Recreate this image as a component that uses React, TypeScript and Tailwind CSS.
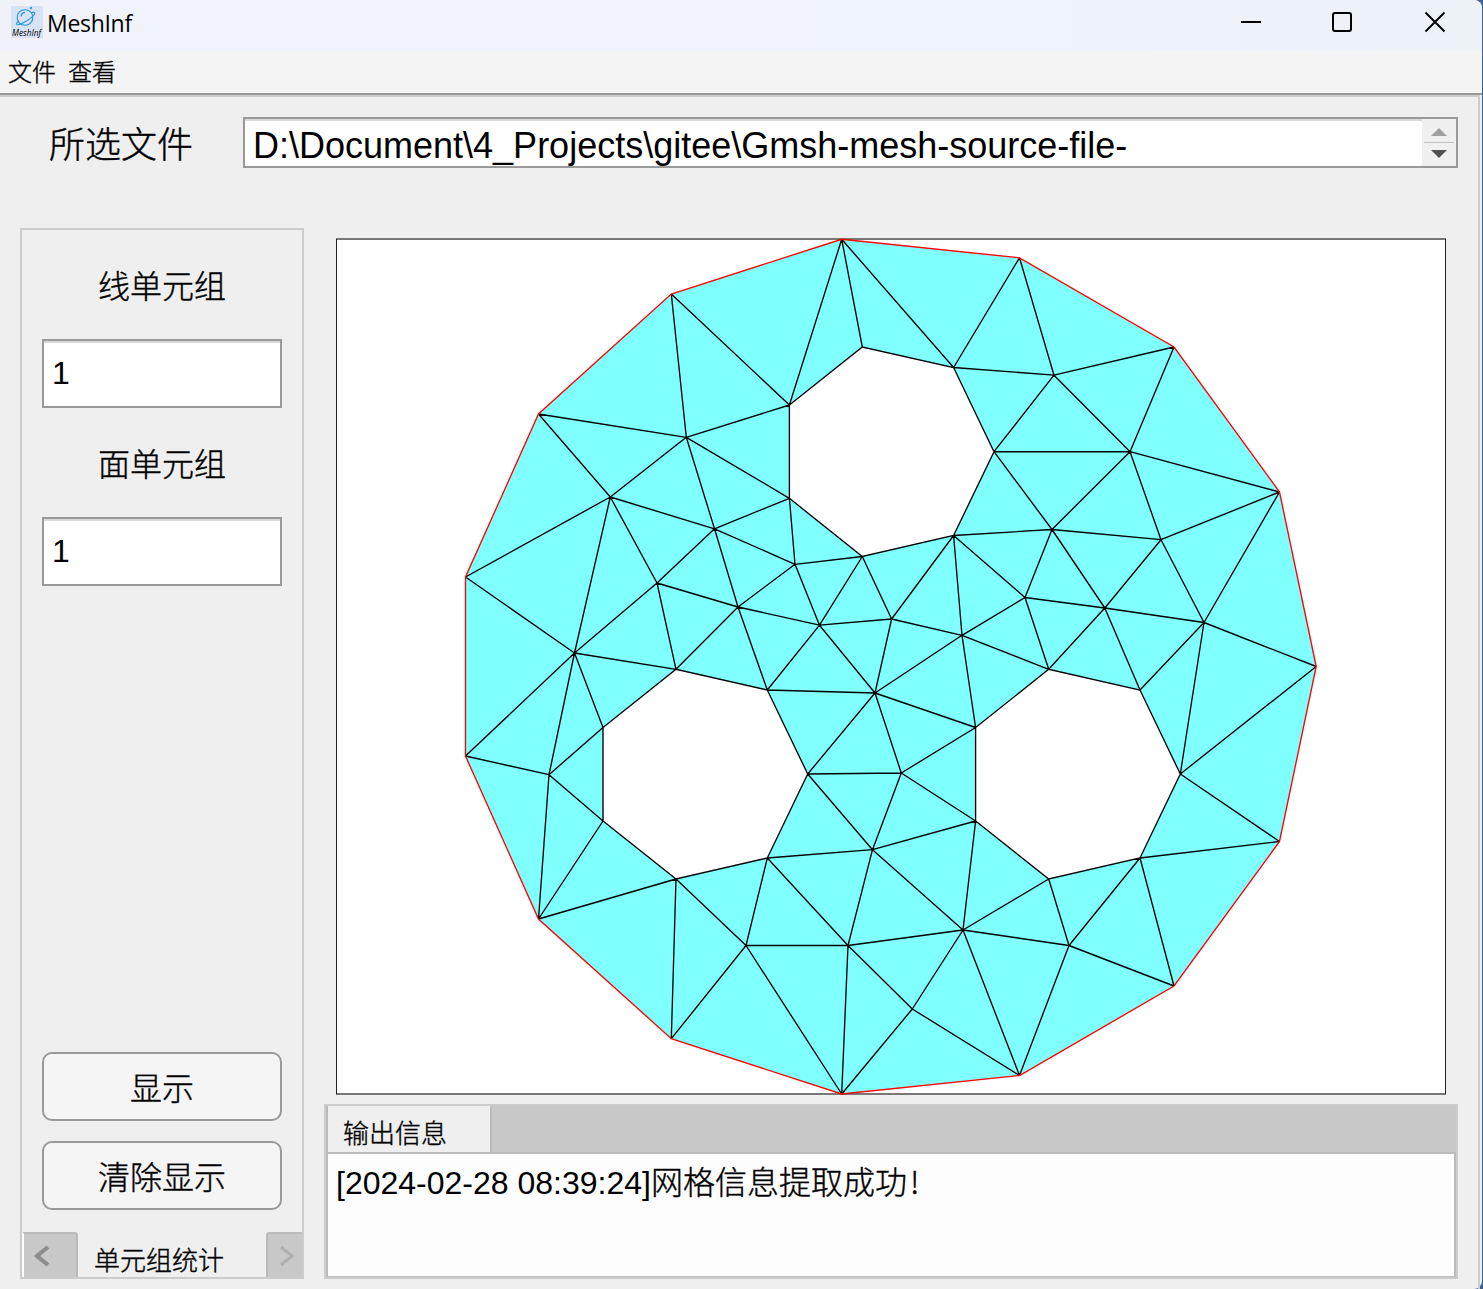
import type { ReactNode } from 'react';

type Point = [number, number];

const outer: Point[] = [
  [1316.2, 666.5], [1279.5, 492], [1174, 347], [1019.5, 257.8], [841.7, 239.3],
  [671.3, 294], [538.5, 414], [465.5, 577], [465.5, 756], [538.5, 919],
  [671.3, 1038.7], [841.7, 1094], [1019.5, 1075.5], [1174, 986], [1279.5, 841.5],
];
const holeTop: Point[] = [
  [994, 451.7], [953.6, 367.5], [862.3, 347], [789.4, 405], [789.4, 498.3], [862.3, 556.5], [953.6, 535.5],
];
const holeLeft: Point[] = [
  [807.7, 774], [767.3, 690], [676, 669.3], [603, 727.5], [603, 821], [676, 879], [767.3, 858],
];
const holeRight: Point[] = [
  [1180.3, 774], [1140, 690], [1048.7, 669.3], [975.6, 727.5], [975.6, 821], [1048.7, 879], [1140, 858],
];

const nodes: Record<string, Point> = {
  A: [1054, 375.2], B: [1130, 451.7], C: [1052, 529.5], D: [1161, 539.7], E: [1204, 622.5],
  F: [1104.8, 608], G: [1025, 597.5], H: [962, 635.3], I: [891.6, 619], J: [819.5, 625.2],
  K: [875, 693], M: [795, 564.3], N: [738, 607], P: [714.5, 528.8], Q: [686.3, 437.3],
  S: [610.3, 497], U: [657, 583], V: [574.5, 653], W: [549, 774.7], X: [901.3, 773],
  Y: [872.5, 849.7], Z: [848, 945.5], a: [746, 945.5], b: [963, 930], c: [1069, 945.5], d: [912.3, 1009],
};
outer.forEach((p, i) => (nodes[`O${i}`] = p));
holeTop.forEach((p, i) => (nodes[`T${i}`] = p));
holeLeft.forEach((p, i) => (nodes[`L${i}`] = p));
holeRight.forEach((p, i) => (nodes[`R${i}`] = p));

const edges = `O4-T1 O4-T2 O4-T3 O3-T1 O3-A T1-A A-O2 O2-B A-B A-T0 T0-B B-O1 B-D B-C T0-C C-T6 C-D D-O1 D-E E-O1
D-F F-C C-G G-F F-E E-O0 G-T6 G-R2 G-H H-T6 H-R2 H-R3 H-K H-I I-T5 I-T6 I-J I-K J-T5 J-M M-T5 M-T4 M-P M-N N-J
N-P N-U N-L2 N-L1 L1-J L1-K J-K K-R3 K-X K-L0 X-L0 X-R3 X-R4 X-Y Y-L0 Y-L6 Y-R4 Y-Z Y-b b-R4 b-R5 b-Z b-c
b-O12 b-d d-Z d-O11 d-O12 Z-O11 Z-L6 Z-a a-L6 a-L5 a-O10 a-O11 L5-O10 L5-O9 L4-O9 W-O9 W-L4 W-L3 W-O8 W-V
V-O8 V-O7 V-L3 V-L2 V-U V-S U-L2 U-S U-P P-S P-T4 P-Q Q-T4 Q-T3 Q-O5 Q-O6 Q-S S-O6 S-O7 O5-T3 c-O12 c-O13
c-R5 c-R6 R6-O13 R6-O14 R0-O14 R0-O0 R0-E R1-E R1-F R2-F`.split(/\s+/);

const closed = (pts: Point[]) => `M${pts.map((p) => p.join(' ')).join('L')}Z`;
const edgePath = edges
  .map((e) => {
    const [from, to] = e.split('-');
    return `M${nodes[from].join(' ')}L${nodes[to].join(' ')}`;
  })
  .join('');
const holes = [holeTop, holeLeft, holeRight].map(closed).join('');

function MeshView() {
  return (
    <svg className="block h-[857px] w-[1110px] shrink-0" viewBox="336 238 1110 857">
      <rect x="336" y="238" width="1110" height="857" fill="#fff" />
      <path d="M336 239H1446M336 1094H1446" stroke="#777" strokeWidth="2" />
      <path d="M336.5 239V1094" stroke="#222" />
      <path d="M1445.5 239V1094" stroke="#222" />
      <path d={closed(outer) + holes} fill="#80ffff" fillRule="evenodd" />
      <path d={edgePath + holes} fill="none" stroke="#000" strokeWidth="1.35" />
      <path d={closed(outer)} fill="none" stroke="#f00" strokeWidth="1.35" />
    </svg>
  );
}

function Logo() {
  return (
    <svg className="h-8 w-8" viewBox="0 0 32 32">
      <rect width="32" height="32" fill="#d8e2f3" />
      <g fill="none" stroke="#1c95dc" strokeWidth="1.1" strokeLinecap="round">
        <circle cx="14" cy="11.5" r="7.8" />
        <path d="M21 6.500c2-.8 3.300-.4 2.800.9-.8 2.300-5 5.600-9.300 8.200-4.200 2.400-8.100 3.800-8.800 2.700-.4-.7.3-1.800 1.700-3.200" />
        <path d="M10 10c.5-2 1.700-3.200 3.500-3.600" />
        <circle cx="20" cy="2" r=".6" />
      </g>
      <text x="1" y="30" textLength="29" lengthAdjust="spacingAndGlyphs" className="font-['Open_Sans',sans-serif] text-[8.5px] font-medium italic">
        MeshInf
      </text>
    </svg>
  );
}

function Field({ value }: { value: string }) {
  return (
    <div className="flex h-[69px] shrink-0 items-center border-2 border-[#999] bg-white pb-[2px] pl-2 shadow-[inset_0_2px_0_#d9d9d9]">
      <span className="font-['Liberation_Sans',sans-serif] text-[32px] leading-none [-webkit-text-stroke:0px]">{value}</span>
    </div>
  );
}

function Label({ children }: { children: ReactNode }) {
  return <div className="flex h-[109px] shrink-0 items-center justify-center pb-[2px] text-[32px] leading-none">{children}</div>;
}

function Button({ children }: { children: ReactNode }) {
  return (
    <button className="flex h-[69px] shrink-0 items-center justify-center rounded-[10px] border-2 border-[#999] bg-[#f5f5f5] pb-px text-[32px] leading-none">
      {children}
    </button>
  );
}

export default function App() {
  return (
    <div className="h-[1289px] w-[1483px] overflow-hidden bg-[#3f6190] font-['Noto_Sans_CJK_SC',sans-serif] font-light text-black [-webkit-text-stroke:0.4px_#000]">
      <div className="flex h-full w-[1482px] flex-col rounded-r-[8px] bg-[#efefef]">
        <header className="flex h-[51px] shrink-0 items-center rounded-tr-[8px] bg-linear-to-r from-[#f1f2f9] via-[#f0f3fb] to-[#edf2f7] pl-[11px] [-webkit-text-stroke:0px]">
          <div className="-mt-[7px]"><Logo /></div>
          <span className="-mt-[4px] ml-[4px] font-['Open_Sans','Noto_Sans',sans-serif] text-[23px] leading-none font-normal tracking-[-0.3px]">MeshInf</span>
          <svg className="mt-[-7px] ml-auto mr-[35px] h-[22px] w-[207px]" viewBox="0 0 207 22" fill="none" stroke="#000" strokeWidth="2">
            <path d="M1 11H21" />
            <rect x="93" y="2" width="18" height="18" rx="2" />
            <path d="M185.500 1.500L204.500 20.500M204.500 1.500L185.500 20.500" strokeWidth="1.900" />
          </svg>
        </header>
        <nav className="flex h-[44px] shrink-0 items-center gap-3 border-b-2 border-[#999] bg-[#f4f4f4] pb-[2px] pl-2 text-[24px] leading-none">
          <span>文件</span>
          <span>查看</span>
        </nav>
        <main className="mr-[2px] flex min-h-0 flex-1 flex-col border-t-2 border-r-2 border-[#ccc] pt-5">
          <div className="flex h-[51px] shrink-0">
            <div className="flex w-[243px] items-center pb-px pl-[49px] text-[36px] leading-none">所选文件</div>
            <div className="flex w-[1215px] border-2 border-[#999] bg-white">
              <div className="flex flex-1 items-center pt-[6px] pl-2 font-['Liberation_Sans',sans-serif] text-[36px] leading-none font-normal shadow-[inset_0_2px_0_#d9d9d9] [-webkit-text-stroke:0px]">
                D:\Document\4_Projects\gitee\Gmsh-mesh-source-file-
              </div>
              <svg className="h-[47px] w-[34px] bg-[#f0f0f0]" viewBox="0 0 34 47">
                <path d="M9 17L17 9L25 17Z" fill="#a0a0a0" />
                <path d="M2 23.500H32" stroke="#c0c0c0" />
                <path d="M9 31L17 39L25 31Z" fill="#505050" />
              </svg>
            </div>
          </div>
          <div className="flex shrink-0 pt-[60px] pl-5">
            <aside className="flex h-[1051px] w-[284px] shrink-0 flex-col border-2 border-[#ccc]">
              <div className="flex flex-1 flex-col px-5">
                <Label>线单元组</Label>
                <Field value="1" />
                <Label>面单元组</Label>
                <Field value="1" />
                <div className="mt-auto mb-[22px] flex flex-col gap-5">
                  <Button>显示</Button>
                  <Button>清除显示</Button>
                </div>
              </div>
              <div className="flex h-[45px] shrink-0">
                <div className="flex w-14 items-center rounded-tr-[3px] border-t-2 border-r-2 border-l-2 border-t-[#bbb] border-r-[#bbb] border-l-white bg-[#c8c8c8]">
                  <svg className="ml-[9px] h-6 w-[18px]" viewBox="0 0 18 24" fill="none" stroke="#8c8c8c" strokeWidth="4">
                    <path d="M15 3L4 12L15 21" />
                  </svg>
                </div>
                <div className="flex flex-1 items-center pt-[9px] pl-[16px] text-[26px] leading-none">单元组统计</div>
                <div className="flex w-[36px] items-center rounded-tl-[3px] border-t-2 border-l-2 border-[#bbb] bg-[#c8c8c8]">
                  <svg className="ml-[10px] h-6 w-[18px]" viewBox="0 0 18 24" fill="none" stroke="#b0b0b0" strokeWidth="3">
                    <path d="M3 3L14 12L3 21" />
                  </svg>
                </div>
              </div>
            </aside>
            <section className="ml-5 flex w-[1134px] shrink-0 flex-col pt-[10px]">
              <div className="pl-3"><MeshView /></div>
              <div className="mt-[9px] flex h-[175px] flex-col border-2 border-[#ccc]">
                <div className="flex h-[46px] shrink-0 border-l-2 border-[#bbb] bg-[#c8c8c8]">
                  <div className="flex w-[164px] items-center rounded-tr-[2px] border-r-2 border-[#bbb] bg-[#efefef] pt-[6px] pl-[15px] text-[26px] leading-none">
                    输出信息
                  </div>
                </div>
                <div className="flex-1 border-t-2 border-r-2 border-b border-l-2 border-[#bbb] bg-[#fdfdfd] pt-[8px] pl-2 text-[32px] leading-9">
                  <span className="font-['Liberation_Sans',sans-serif] font-normal [-webkit-text-stroke:0px]">[2024-02-28 08:39:24]</span>网格信息提取成功<span className="ml-[3px]">!</span>
                </div>
              </div>
            </section>
          </div>
        </main>
      </div>
    </div>
  );
}
